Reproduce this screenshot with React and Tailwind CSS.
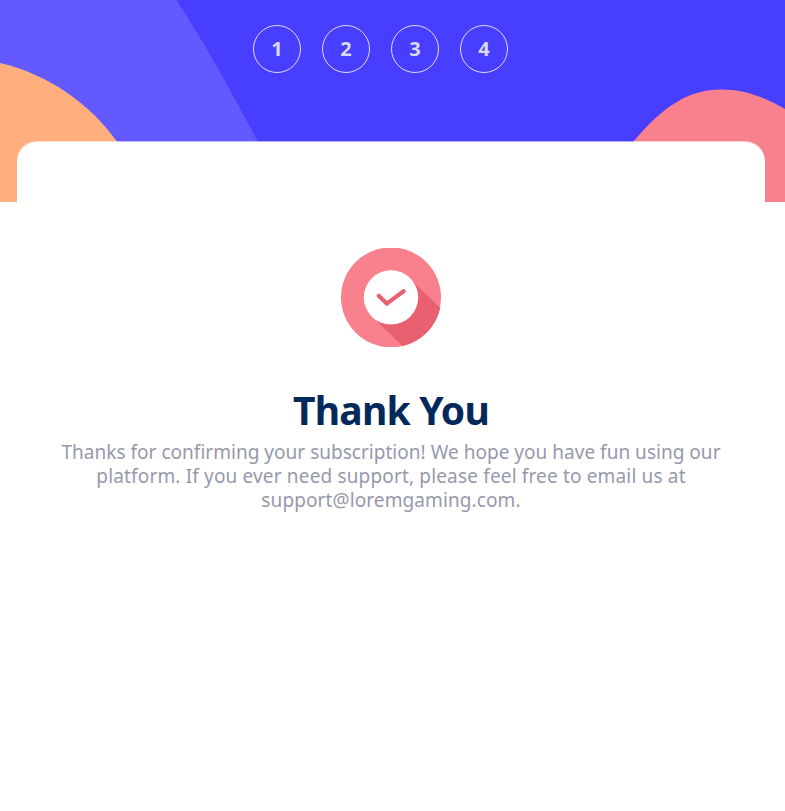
const steps = [1, 2, 3, 4];

function HeroArt() {
  return (
    <svg className="absolute inset-0 h-full w-full" viewBox="0 0 785 202" preserveAspectRatio="none" aria-hidden="true">
      <rect width="785" height="202" fill="#483EFF" />
      <path d="M0 0H176.5C205 44 230 89 257.5 141L288 202H0Z" fill="#6259FF" />
      <path d="M0 63C48 74 90 104 116.500 141C130 161 138 181 142 202H0Z" fill="#FFAF7E" />
      <path d="M600 202C608 175 621 156 634 141C662 108 687 89.500 721 89.500C745 89.500 764 97 785 109V202Z" fill="#F9818E" />
    </svg>
  );
}

function ThankYouIcon() {
  return (
    <svg className="h-[100px] w-[100px]" viewBox="0 0 100 100" aria-hidden="true">
      <clipPath id="badge">
        <rect y="1" width="100" height="99" />
      </clipPath>
      <g clipPath="url(#badge)">
        <circle cx="50" cy="50.400" r="50" fill="#F9818E" />
        <path d="M69 31.400L99.200 60.900A50 50 0 0 1 61.500 99.100L31 69.400Z" fill="#E96170" />
        <circle cx="50" cy="50.400" r="27.200" fill="#fff" />
        <path d="M37.700 48.800L45.800 56.600L62.600 44.300" fill="none" stroke="#E96170" strokeWidth="4.200" strokeLinecap="round" strokeLinejoin="miter" />
      </g>
    </svg>
  );
}

export default function App() {
  return (
    <div className="h-[811px] overflow-hidden bg-white">
      <header className="relative h-[202px]">
        <HeroArt />
        <ol className="relative flex gap-[21px] pt-[25px] pl-[253px]">
          {steps.map((step) => (
            <li
              key={step}
              className="flex h-12 w-12 items-center justify-center rounded-full border border-[#dcdcf0] font-['Open_Sans',sans-serif] text-[20px] leading-none font-bold text-[#d9d9ec]"
            >
              {step}
            </li>
          ))}
        </ol>
      </header>
      <main className="relative -mt-[61px] mr-5 ml-[17px] flex h-[600px] flex-col items-center rounded-[20px] border-t border-white/60 bg-white bg-clip-padding pt-[105px]">
        <ThankYouIcon />
        <h1 className="mt-[37px] font-['Noto_Sans',sans-serif] text-[39px] leading-[52px] font-bold tracking-[-0.800px] whitespace-nowrap text-[#02295a]">
          Thank You
        </h1>
        <p className="mt-1 text-center font-['Noto_Sans',sans-serif] text-[19px] leading-6 whitespace-nowrap text-[#9699ab]">
          <span className="block tracking-[0.020px]">Thanks for confirming your subscription! We hope you have fun using our</span>
          <span className="block tracking-[0.160px]">platform. If you ever need support, please feel free to email us at</span>
          <span className="block tracking-[0.100px]">support@loremgaming.com.</span>
        </p>
      </main>
    </div>
  );
}
